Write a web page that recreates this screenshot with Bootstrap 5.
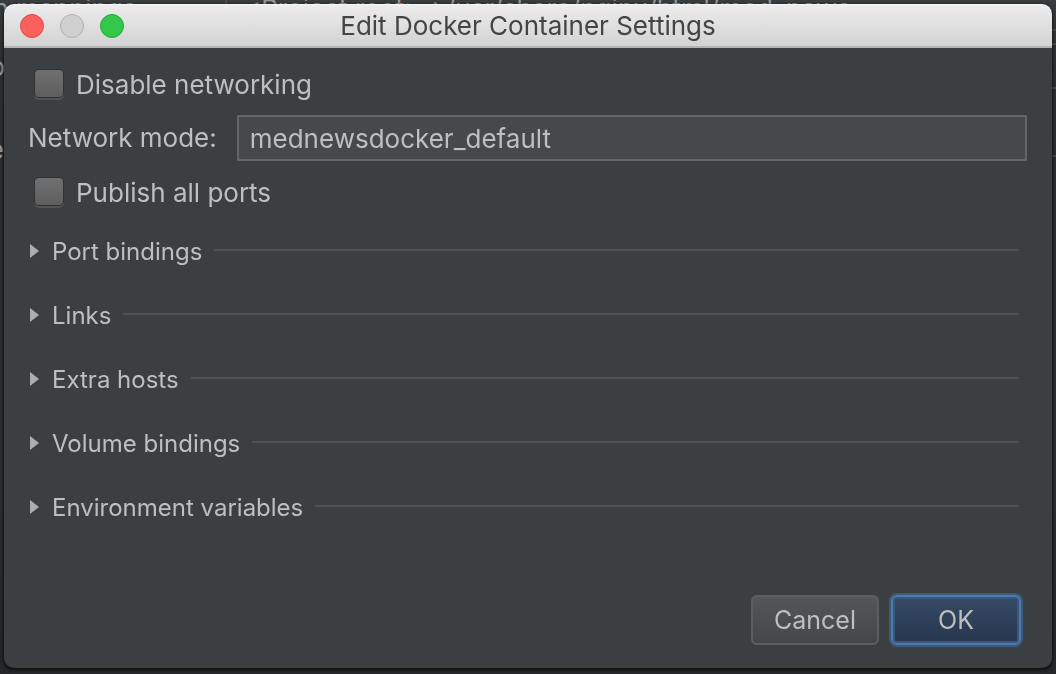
<!DOCTYPE html>
<html lang="en">
<head>
<meta charset="utf-8">
<meta name="viewport" content="width=device-width, initial-scale=1">
<title>Edit Docker Container Settings</title>
<link href="https://cdn.jsdelivr.net/npm/bootstrap@5.3.0/dist/css/bootstrap.min.css" rel="stylesheet">
<style>
  body { background: #2b2c2d; color: #bfbfbf; font-family: Inter, "Liberation Sans", sans-serif; font-size: 26px; line-height: 32px; }

  /* window behind the dialog */
  .backdrop-window { background: linear-gradient(#3a3d3f, #2d2f30 60px, #2b2c2d 180px, #2b2c2d 500px, #252627); color: #999; }
  .backdrop-window span { position: absolute; white-space: nowrap; }
  .bg-mappings { right: calc(100% - 144px); top: -7px; }
  .bg-path { left: 244px; top: -7px; }
  .bg-host { right: calc(100% - 5px); top: 51px; }
  .bg-volume { right: calc(100% - 4px); top: 134px; }
  .bg-divider { left: 225px; top: 0; width: 2px; height: 6px; background: #4b4d4e; }
  .bg-rule { right: 0; width: 6px; height: 2px; background: #484a4b; }

  .dialog-window { margin: 4px 4px 6px; min-height: calc(100vh - 10px); background: #3c3f41; border-radius: 10px; box-shadow: 0 1px 3px 1px rgba(0,0,0,.6); }
  .title-bar { height: 44px; padding: 0 16px; background: linear-gradient(#ececec, #d3d3d3); border-top: 1px solid #f7f7f7; border-bottom: 2px solid #b3b5b5; border-radius: 10px 10px 0 0; color: #444; }
  .lights, .lights-balance { width: 104px; }
  .light { width: 24px; height: 24px; padding: 0; border: 1px solid; border-radius: 50%; }
  .light-close { background: #fc605c; border-color: #e2463f; }
  .light-min { background: #d0d0d0; border-color: #b0b0b0; }
  .light-zoom { background: #34c84a; border-color: #1dad2b; }

  .dialog-main { padding: 21px 25px 23px 24px; }
  .form-check.check-row { min-height: 32px; margin: 0; padding: 0 0 0 7px; gap: 13px; }
  .check-row .form-check-input { float: none; width: 28px; height: 27px; margin: 0 0 3px; border: 0; border-radius: 4px; background-color: #676767; background-image: linear-gradient(#707070, #5e5e5e); box-shadow: 0 0 0 1px #2f3132, 0 2px 0 1px #515354; }
  .check-row .form-check-input:checked { background-image: linear-gradient(#4f7cab, #3b628c); }
  .mode-row { margin: 14px 0 16px; gap: 20px; }
  .form-control.mode-input { height: 46px; padding: 0 11px; border: 2px solid #646464; border-radius: 0; background: #45494a; color: #bfbfbf; font-size: 26px; line-height: 32px; }

  .sections { margin-top: 27px; gap: 32px; padding-right: 8px; font-size: 24px; }
  .section-toggle { padding: 0 0 0 2px; border: 0; background: none; color: inherit; gap: 12px; }
  .section-toggle svg { width: 9px; height: 14px; margin: 0 1px 2px 0; fill: #adadad; }
  .section-toggle i { height: 2px; background: #515151; margin-bottom: 4px; }

  .actions { gap: 12px; padding-right: 6px; }
  .dialog-btn { height: 50px; font-size: 25px; line-height: 32px; padding: 0; border-radius: 6px; color: #bfbfbf; }
  .btn-cancel { width: 128px; border: 2px solid #5c5f60; background: linear-gradient(#525758, #434748); }
  .btn-ok { width: 130px; border: 2px solid #4a7ab0; background: linear-gradient(#364a65, #26364d); box-shadow: 0 0 0 2px #3f5a78, inset 0 0 0 2px #3a587c; }
  .btn-cancel:hover, .btn-ok:hover { color: #ddd; }
</style>
</head>
<body>
<div class="backdrop-window position-fixed top-0 start-0 w-100 h-100 overflow-hidden" aria-hidden="true">
  <span class="bg-mappings">Path mappings:</span>
  <span class="bg-divider"></span>
  <span class="bg-path">&lt;Project root&gt;→/usr/share/nginx/html/med_news</span>
  <span class="bg-host">o</span>
  <span class="bg-volume">e</span>
  <span class="bg-rule" style="top:29px"></span>
  <span class="bg-rule" style="top:43px"></span>
  <span class="bg-rule" style="top:87px"></span>
  <span class="bg-rule" style="top:155px"></span>
</div>

<form class="dialog-window position-relative d-flex flex-column" role="dialog" aria-labelledby="dialogTitle">
  <header class="title-bar d-flex align-items-center justify-content-between">
    <div class="lights d-flex justify-content-between">
      <button type="button" class="light light-close" aria-label="Close"></button>
      <button type="button" class="light light-min" aria-label="Minimize" disabled></button>
      <button type="button" class="light light-zoom" aria-label="Zoom"></button>
    </div>
    <div id="dialogTitle" class="text-center text-nowrap">Edit Docker Container Settings</div>
    <div class="lights-balance"></div>
  </header>

  <main class="dialog-main d-flex flex-column flex-grow-1">
    <div class="form-check check-row d-flex align-items-center">
      <input class="form-check-input" type="checkbox" id="disableNetworking">
      <label class="form-check-label" for="disableNetworking">Disable networking</label>
    </div>
    <div class="mode-row d-flex align-items-center">
      <label class="text-nowrap" for="networkMode">Network mode:</label>
      <input class="form-control mode-input flex-grow-1" type="text" id="networkMode" value="mednewsdocker_default" spellcheck="false">
    </div>
    <div class="form-check check-row d-flex align-items-center">
      <input class="form-check-input" type="checkbox" id="publishPorts">
      <label class="form-check-label" for="publishPorts">Publish all ports</label>
    </div>

    <div class="sections d-flex flex-column">
      <button type="button" class="section-toggle d-flex align-items-center" aria-expanded="false"><svg viewBox="0 0 9 14"><path d="M0 0L9 7L0 14Z"/></svg><span>Port bindings</span><i class="flex-grow-1"></i></button>
      <button type="button" class="section-toggle d-flex align-items-center" aria-expanded="false"><svg viewBox="0 0 9 14"><path d="M0 0L9 7L0 14Z"/></svg><span>Links</span><i class="flex-grow-1"></i></button>
      <button type="button" class="section-toggle d-flex align-items-center" aria-expanded="false"><svg viewBox="0 0 9 14"><path d="M0 0L9 7L0 14Z"/></svg><span>Extra hosts</span><i class="flex-grow-1"></i></button>
      <button type="button" class="section-toggle d-flex align-items-center" aria-expanded="false"><svg viewBox="0 0 9 14"><path d="M0 0L9 7L0 14Z"/></svg><span>Volume bindings</span><i class="flex-grow-1"></i></button>
      <button type="button" class="section-toggle d-flex align-items-center" aria-expanded="false"><svg viewBox="0 0 9 14"><path d="M0 0L9 7L0 14Z"/></svg><span>Environment variables</span><i class="flex-grow-1"></i></button>
    </div>

    <footer class="actions d-flex justify-content-end align-items-center mt-auto">
      <button type="button" class="btn dialog-btn btn-cancel">Cancel</button>
      <button type="submit" class="btn dialog-btn btn-ok">OK</button>
    </footer>
  </main>
</form>
<script src="https://cdn.jsdelivr.net/npm/bootstrap@5.3.0/dist/js/bootstrap.bundle.min.js"></script>
</body>
</html>
